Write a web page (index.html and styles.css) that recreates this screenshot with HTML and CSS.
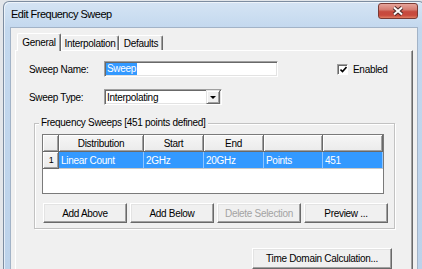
FILE: index.html
```html
<!DOCTYPE html>
<html>
<head>
    <meta charset="UTF-8">
    <title>Edit Frequency Sweep</title>
    <link rel="stylesheet" href="styles.css">
</head>
<body>
    <div class="window">
        <div class="titlebar">
            <span class="title">Edit Frequency Sweep</span>
            <div class="close-btn">
                <svg width="38" height="14" viewBox="0 0 38 14">
                    <path d="M15 3.5 L23 10.5 M23 3.5 L15 10.5" stroke="#4a2a28" stroke-width="4" fill="none"/>
                    <path d="M15 3.5 L23 10.5 M23 3.5 L15 10.5" stroke="#ffffff" stroke-width="2" fill="none"/>
                </svg>
            </div>
        </div>
        <div class="client">
            <div class="tabs">
                <div class="tab active tab-general">General</div>
                <div class="tab tab-interp">Interpolation</div>
                <div class="tab tab-defaults">Defaults</div>
            </div>
            <div class="panel">
                <div class="form-row">
                    <label class="field-label">Sweep Name:</label>
                    <div class="textbox"><span class="sel">Sweep</span></div>
                    <div class="check-wrap">
                        <span class="checkbox">
                            <svg width="7" height="7" viewBox="0 0 7 7">
                                <path d="M0.5 3.5 L2.5 5.5 L6.5 1" stroke="#000" stroke-width="1.6" fill="none"/>
                            </svg>
                        </span>
                        <span>Enabled</span>
                    </div>
                </div>
                <div class="form-row">
                    <label class="field-label">Sweep Type:</label>
                    <div class="combo">
                        <span class="combo-text">Interpolating</span>
                        <span class="combo-btn"><span class="arrow"></span></span>
                    </div>
                </div>
                <div class="group">
                    <div class="group-title"><span>Frequency Sweeps [451 points defined]</span></div>
                    <div class="grid">
                        <div class="hcell"></div>
                        <div class="hcell">Distribution</div>
                        <div class="hcell">Start</div>
                        <div class="hcell">End</div>
                        <div class="hcell"></div>
                        <div class="hcell"></div>
                        <div class="hcell rhead">1</div>
                        <div class="dcell">Linear Count</div>
                        <div class="dcell">2GHz</div>
                        <div class="dcell">20GHz</div>
                        <div class="dcell">Points</div>
                        <div class="dcell">451</div>
                    </div>
                    <div class="btn-row">
                        <button class="btn">Add Above</button>
                        <button class="btn">Add Below</button>
                        <button class="btn disabled">Delete Selection</button>
                        <button class="btn">Preview ...</button>
                    </div>
                </div>
                <button class="btn time-btn">Time Domain Calculation...</button>
            </div>
        </div>
    </div>
</body>
</html>
```

FILE: styles.css
```css
*, *::before, *::after {
    box-sizing: border-box;
}
body {
    margin: 0;
    height: 269px;
    overflow: hidden;
    background: #e3e6ea;
    font-family: "Liberation Sans", Arial, sans-serif;
    font-size: 10px;
    letter-spacing: -0.3px;
    color: #000;
}
.window {
    margin: 1px 0 0 3px;
    width: 422px;
    height: 268px;
    padding: 0 6px;
    border: 1px solid #7d8da1;
    border-bottom: none;
    border-radius: 6px 6px 0 0;
    background: linear-gradient(180deg, #d5e4f4 0, #c3d8ee 26px, #bcd2ea 100%);
    box-shadow: inset 1px 1px rgba(255, 255, 255, 0.6);
}
.titlebar {
    display: flex;
    height: 25px;
}
.title {
    font-size: 11px;
    letter-spacing: -0.5px;
    line-height: 13px;
    padding: 6px 0 0 1px;
}
.close-btn {
    margin-left: auto;
    margin-top: 1px;
    width: 40px;
    height: 16px;
    border: 1px solid #7a3a33;
    border-radius: 3px;
    background: linear-gradient(180deg, #e6a49b 0%, #d57d72 40%, #c64a3e 55%, #c8493c 80%, #df7d63 100%);
    display: flex;
    align-items: center;
    justify-content: center;
}
.client {
    width: 408px;
    height: 243px;
    border: 1px solid #a2b3c7;
    border-bottom: none;
    background: #f0f0f0;
    padding: 5px 4px 0;
}
/* tab strip */
.tabs {
    display: flex;
    align-items: flex-end;
    height: 17px;
    padding-left: 2px;
}
.tab {
    height: 15px;
    border-top: 1px solid #fff;
    border-left: 1px solid #fff;
    border-right: 1px solid #696969;
    box-shadow: inset -1px 0 #a0a0a0;
    border-radius: 2px 2px 0 0;
    display: flex;
    align-items: center;
    justify-content: center;
    background: #f0f0f0;
}
.tab.active {
    height: 18px;
    margin-bottom: -1px;
    position: relative;
    z-index: 1;
    padding-bottom: 1px;
}
.tab-general { width: 44px; }
.tab-interp { width: 58px; }
.tab-defaults { width: 44px; }
.panel {
    width: 398px;
    height: 220px;
    border-top: 1px solid #fff;
    border-left: 1px solid #fff;
    border-right: 1px solid #696969;
    box-shadow: inset -1px 0 #a0a0a0;
    padding: 10px 0 0 13px;
}
/* form rows */
.form-row {
    display: flex;
    align-items: center;
    height: 16px;
}
.form-row + .form-row {
    margin-top: 12px;
}
.field-label {
    width: 75px;
}
.textbox, .combo {
    height: 16px;
    background: #fff;
    border: 1px solid;
    border-color: #a0a0a0 #fff #fff #a0a0a0;
    box-shadow: inset 1px 1px #696969, inset -1px -1px #e3e3e3;
    display: flex;
    align-items: center;
}
.textbox {
    width: 174px;
    padding-left: 1px;
}
.sel {
    background: #3399ff;
    color: #fff;
    line-height: 12px;
    padding: 0 1px;
}
.check-wrap {
    margin-left: 59px;
    display: flex;
    align-items: center;
    gap: 5px;
}
.checkbox {
    width: 11px;
    height: 11px;
    background: #fff;
    border: 1px solid;
    border-color: #a0a0a0 #fff #fff #a0a0a0;
    box-shadow: inset 1px 1px #696969;
    display: flex;
    align-items: center;
    justify-content: center;
    padding: 1px 0 0 1px;
}
.combo {
    width: 118px;
    padding-left: 2px;
}
.combo-btn {
    margin-left: auto;
    margin-right: 1px;
    width: 14px;
    height: 14px;
    background: #f0f0f0;
    border: 1px solid;
    border-color: #e3e3e3 #696969 #696969 #e3e3e3;
    box-shadow: inset 1px 1px #fff, inset -1px -1px #a0a0a0;
    display: flex;
    align-items: center;
    justify-content: center;
}
.arrow {
    width: 0;
    height: 0;
    border-left: 3px solid transparent;
    border-right: 3px solid transparent;
    border-top: 3px solid #000;
}
/* group box */
.group {
    margin: 18px 0 0 5px;
    width: 361px;
    border: 1px solid #c2c2c2;
    box-shadow: inset 1px 1px #fff, 1px 1px #fff;
    padding: 0 0 5px 7px;
}
.group-title {
    margin: -7px 0 0 -3px;
    height: 12px;
    line-height: 12px;
}
.group-title span {
    background: #f0f0f0;
    padding: 0 2px;
}
.grid {
    margin-top: 5px;
    width: 342px;
    height: 60px;
    border: 1px solid #7a7a7a;
    background: #fff;
    display: grid;
    grid-template-columns: 16px 85px 60px 60px 59px 60px;
    grid-template-rows: 17px 17px;
    align-content: start;
}
.hcell {
    background: linear-gradient(180deg, #f6f6f6, #ebebeb);
    border-right: 1px solid #696969;
    border-bottom: 1px solid #696969;
    box-shadow: inset 1px 1px #fff, inset -1px -1px #a0a0a0;
    display: flex;
    align-items: center;
    justify-content: center;
}
.rhead {
    font-size: 9px;
    padding-left: 1px;
}
.dcell {
    background: #3399ff;
    color: #fff;
    border-right: 1px solid #8ec5ff;
    border-bottom: 1px solid #c8c8c8;
    padding-left: 2px;
    display: flex;
    align-items: center;
}
/* buttons */
.btn-row {
    display: flex;
    gap: 3px;
    margin: 9px 0 0 1px;
}
.btn {
    width: 84px;
    height: 20px;
    padding: 0;
    font: inherit;
    letter-spacing: inherit;
    color: #000;
    background: #f0f0f0;
    border: 1px solid;
    border-color: #fff #696969 #696969 #fff;
    box-shadow: inset -1px -1px #a0a0a0, inset 1px 1px #e3e3e3;
    border-radius: 0;
}
.btn.disabled {
    color: #a3a3a3;
}
.time-btn {
    display: block;
    margin: 19px 0 0 223px;
    width: 140px;
    height: 21px;
}
```
